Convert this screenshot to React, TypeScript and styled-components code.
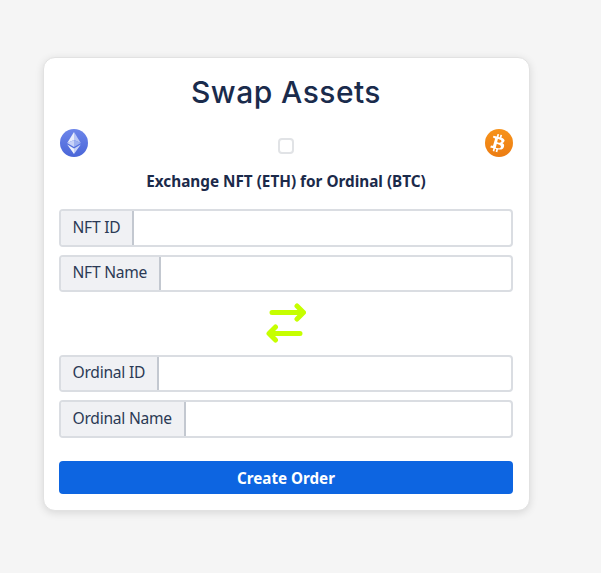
import React from "react";
import styled, { createGlobalStyle } from "styled-components";

const GlobalStyle = createGlobalStyle`
  html, body {
    margin: 0;
    padding: 0;
    background: #f5f5f5;
  }
  body {
    font-family: "Noto Sans", sans-serif;
    color: #1b2a4a;
  }
  * {
    box-sizing: border-box;
  }
`;

const Page = styled.main`
  min-height: 573px;
  padding: 57px 72px 0 43px;
`;

const Card = styled.section`
  width: 487px;
  height: 454px;
  padding: 16px 16px 16px 15px;
  background: #fff;
  border: 1px solid #e2e2e2;
  border-radius: 12px;
  box-shadow: 0 2px 8px rgba(0, 0, 0, 0.12);
`;

const Title = styled.h1`
  margin: 0;
  height: 38px;
  font-family: Inter, sans-serif;
  font-size: 30px;
  font-weight: 500;
  line-height: 36px;
  letter-spacing: 0.45px;
  text-align: center;
  color: #1a2b4c;
`;

const CoinRow = styled.div`
  display: flex;
  align-items: center;
  justify-content: space-between;
  height: 30px;
  margin-top: 16px;
  padding: 0 0 0 1px;
`;

const Coin = styled.span<{ $from: string; $to: string }>`
  display: flex;
  align-items: center;
  justify-content: center;
  width: 28px;
  height: 28px;
  border-radius: 50%;
  background: linear-gradient(${(p) => p.$from}, ${(p) => p.$to});
`;

const Toggle = styled.input`
  appearance: none;
  width: 16px;
  height: 16px;
  margin: 5px 1px 0 0;
  background: #fff;
  border: 2px solid #e1e3e6;
  border-radius: 4px;
`;

const Subtitle = styled.p`
  margin: 12px 0 17px;
  height: 22px;
  font-size: 15.3px;
  font-weight: 700;
  line-height: 22px;
  text-align: center;
  color: #1b2a4a;
`;

const Fields = styled.div`
  display: flex;
  flex-direction: column;
  gap: 8px;
`;

const InputGroup = styled.label`
  display: flex;
  height: 37.5px;
  background: #fff;
  border: 2px solid #dadde2;
  border-radius: 4px;
`;

const GroupLabel = styled.span`
  display: flex;
  align-items: center;
  padding: 0 12px 2px 11.5px;
  font-size: 15.6px;
  letter-spacing: -0.25px;
  color: #2b3a55;
  background: #f0f1f4;
  border-right: 2px solid #c3c8d0;
  border-radius: 2px 0 0 2px;
`;

const GroupInput = styled.input`
  flex: 1;
  min-width: 0;
  border: 0;
  outline: 0;
  background: transparent;
`;

const SwapIcon = styled.div`
  display: flex;
  justify-content: center;
  align-items: center;
  height: 62.5px;
`;

const SubmitButton = styled.button`
  display: block;
  width: 100%;
  height: 33px;
  margin-top: 23.5px;
  padding: 0;
  font-family: inherit;
  font-size: 15.2px;
  font-weight: 700;
  color: #fff;
  background: #0d65e1;
  border: 0;
  border-radius: 4px;
`;

const topFields = ["NFT ID", "NFT Name"];
const bottomFields = ["Ordinal ID", "Ordinal Name"];

const Field: React.FC<{ name: string }> = ({ name }) => (
  <InputGroup>
    <GroupLabel>{name}</GroupLabel>
    <GroupInput type="text" />
  </InputGroup>
);

export default function App() {
  return (
    <>
      <GlobalStyle />
      <Page>
        <Card>
          <Title>Swap Assets</Title>
          <CoinRow>
            <Coin $from="#6c85ea" $to="#4a66d8">
              <svg width="16" height="24" viewBox="0 0 16 24">
                <path d="M8 1 1.2 12 8 9z" fill="#e8edfc" />
                <path d="M8 1l6.8 11L8 9z" fill="#b9c6f5" />
                <path d="M8 9l-6.8 3L8 16z" fill="#c9d3f8" />
                <path d="M8 9l6.8 3L8 16z" fill="#9db0f0" />
                <path d="M1.2 13.4 8 23v-5.4z" fill="#eef2fd" />
                <path d="M14.8 13.4 8 23v-5.4z" fill="#c9d3f8" />
              </svg>
            </Coin>
            <Toggle type="checkbox" />
            <Coin $from="#f7931a" $to="#ec7c12">
              <svg width="24" height="24" viewBox="0 0 24 24" fill="#fff">
                <path d="M17.7 10.6c.3-2-1.2-3.1-3.3-3.8l.7-2.7-1.7-.4-.6 2.6-1.3-.3.6-2.7-1.6-.4-.7 2.7-3.4-.8-.5 1.8 1.3.3c.7.2.8.6.8 1L6.1 14.4c-.1.2-.3.5-.8.4l-1.3-.3-.8 2 3.2.8-.7 2.8 1.6.4.7-2.7 1.3.3-.7 2.7 1.7.4.7-2.8c2.9.5 5 .3 5.9-2.3.7-2.1 0-3.3-1.5-4.1 1.1-.2 1.9-1 2.1-2.4zm-3.8 5.4c-.5 2.1-4 1-5.1.7l.9-3.7c1.1.3 4.8.8 4.2 3zm.5-5.4c-.5 1.9-3.4.9-4.3.7l.8-3.4c1 .3 4 .7 3.5 2.7z" />
              </svg>
            </Coin>
          </CoinRow>
          <Subtitle>Exchange NFT (ETH) for Ordinal (BTC)</Subtitle>
          <Fields>
            {topFields.map((name) => (
              <Field key={name} name={name} />
            ))}
          </Fields>
          <SwapIcon>
            <svg width="40" height="40" viewBox="0 0 40 40" fill="none" stroke="#c6ff00" strokeWidth="5" strokeLinecap="round" strokeLinejoin="round">
              <path d="M6 9.5h31M31 3l6.5 6.5L31 16" />
              <path d="M34 30.5H3.5M9.5 24 3 30.5 9.5 37" />
            </svg>
          </SwapIcon>
          <Fields>
            {bottomFields.map((name) => (
              <Field key={name} name={name} />
            ))}
          </Fields>
          <SubmitButton type="button">Create Order</SubmitButton>
        </Card>
      </Page>
    </>
  );
}
